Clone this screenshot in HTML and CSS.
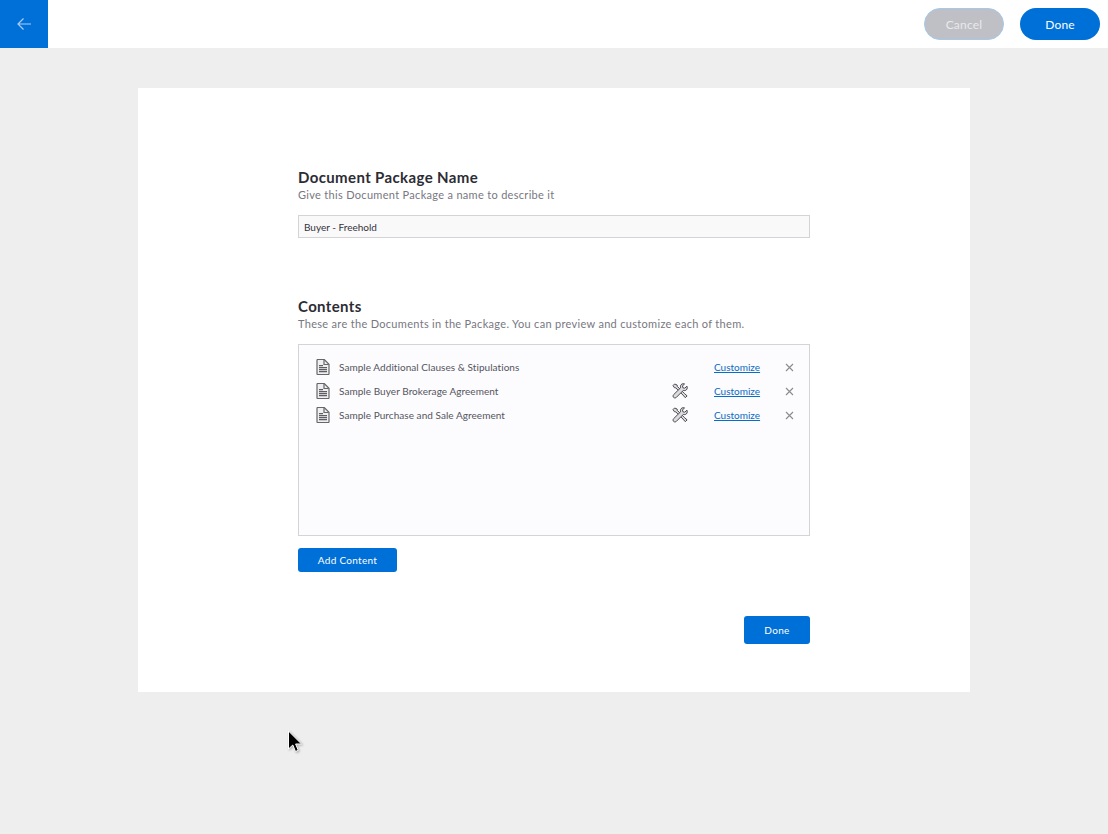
FILE: index.html
```html
<!DOCTYPE html>
<html lang="en">
<head>
<meta charset="utf-8">
<title>Document Package</title>
<link rel="stylesheet" href="styles.css">
</head>
<body>
<svg class="defs" width="0" height="0" aria-hidden="true">
  <symbol id="doc" viewBox="0 0 14 16">
    <path d="M1 1.200C1 .8 1.300.5 1.700.5h6.500l4.800 4.800v9.500c0 .4-.3.7-.7.7H1.700c-.4 0-.7-.3-.7-.7z" fill="#efeff0" stroke="#66666c" stroke-width="1.200"/>
    <path d="M8 .8v4.700h4.700" fill="none" stroke="#66666c" stroke-width="1.200"/>
    <path d="M3 6.600h4M3 8.600h8M3 10.600h8M3 12.600h8" stroke="#5c5c62" stroke-width="1.100"/>
  </symbol>
  <symbol id="tools" viewBox="0 0 16 16">
    <path d="M2.600 1 1 2.600l1.400 2.100 1.400.2 7.200 7.200 2.300 2.600 1.800-1.800-2.600-2.300-7.200-7.200-.2-1.400z" fill="#dcdcdf" stroke="#4a4a50" stroke-width="1"/>
    <path d="M15 3.200l-2.300 2-1.800-.4-.4-1.800 2-2.200c-1.800-.5-3.600.4-4 2-.2.700-.1 1.400.1 2l-7 6.900c-.7.700-.7 2 0 2.700s2 .7 2.700 0l7-7c.6.200 1.300.3 2 .1 1.500-.4 2.500-2.200 1.700-4.300z" fill="#dcdcdf" stroke="#4a4a50" stroke-width="1" stroke-linejoin="round"/>
  </symbol>
  <symbol id="close" viewBox="0 0 9 9">
    <path d="M1 1l7 7M8 1 1 8" fill="none" stroke="#8a8a90" stroke-width="1.100"/>
  </symbol>
</svg>

<header class="topbar">
  <a class="back" href="#" aria-label="Back">
    <svg width="16" height="14" viewBox="0 0 16 14"><path d="M15 7H2M7.500 1.500 2 7l5.500 5.500" fill="none" stroke="#a9cdf3" stroke-width="1.200"/></svg>
  </a>
  <div class="top-actions">
    <button class="pill pill-muted" type="button">Cancel</button>
    <button class="pill pill-primary" type="button">Done</button>
  </div>
</header>

<main class="stage">
  <section class="card">
    <div class="form">
      <h2 class="title">Document Package Name</h2>
      <p class="hint">Give this Document Package a name to describe it</p>
      <input class="name-input" type="text" value="Buyer - Freehold">

      <h2 class="title contents-title">Contents</h2>
      <p class="hint">These are the Documents in the Package. You can preview and customize each of them.</p>
      <ul class="doc-list">
        <li class="doc-row">
          <svg class="doc-icon"><use href="#doc"/></svg>
          <span class="doc-name">Sample Additional Clauses &amp; Stipulations</span>
          <a class="customize" href="#">Customize</a>
          <svg class="close-icon"><use href="#close"/></svg>
        </li>
        <li class="doc-row">
          <svg class="doc-icon"><use href="#doc"/></svg>
          <span class="doc-name">Sample Buyer Brokerage Agreement</span>
          <svg class="tools-icon"><use href="#tools"/></svg>
          <a class="customize" href="#">Customize</a>
          <svg class="close-icon"><use href="#close"/></svg>
        </li>
        <li class="doc-row">
          <svg class="doc-icon"><use href="#doc"/></svg>
          <span class="doc-name">Sample Purchase and Sale Agreement</span>
          <svg class="tools-icon"><use href="#tools"/></svg>
          <a class="customize" href="#">Customize</a>
          <svg class="close-icon"><use href="#close"/></svg>
        </li>
      </ul>
      <button class="btn btn-add" type="button">Add Content</button>
      <div class="form-footer">
        <button class="btn btn-done" type="button">Done</button>
      </div>
    </div>
  </section>
</main>

<svg class="cursor" width="16" height="24" viewBox="0 0 16 24" aria-hidden="true">
  <path d="M1.500 1v18l4.300-4 2.700 6.500 2.800-1.200-2.700-6.300h5.900z" fill="#000" stroke="#fff" stroke-width="1"/>
</svg>
</body>
</html>
```
FILE: styles.css
```css
* { box-sizing: border-box; }
html, body { height: 100%; }
body {
  margin: 0;
  background: #eeeeef;
  font-family: "Lato", "Noto Sans", sans-serif;
  color: #2c2c34;
  overflow: hidden;
  position: relative;
}
.defs { position: absolute; }

.topbar {
  height: 48px;
  background: #fff;
  display: flex;
  align-items: center;
  justify-content: space-between;
}
.back {
  width: 48px;
  height: 48px;
  background: #0070d9;
  display: flex;
  align-items: center;
  justify-content: center;
}
.top-actions {
  display: flex;
  gap: 16px;
  padding-right: 8px;
}
.pill {
  width: 80px;
  height: 32px;
  border-radius: 16px;
  border: 0;
  font: inherit;
  font-size: 12px;
  letter-spacing: .2px;
  color: #fff;
}
.pill-muted {
  background: #bfc0c5;
  border: 1px solid #a5c9e8;
  color: #e9e9ec;
}
.pill-primary { background: #0070d9; }

.stage { padding: 40px 138px 0; }
.card {
  height: 604px;
  background: #fff;
  padding: 80px 160px 0;
}
.form { width: 512px; }
.title {
  margin: 0 0 1px;
  font-size: 15px;
  line-height: 18px;
  font-weight: 700;
  letter-spacing: .37px;
  color: #2c2c34;
}
.hint {
  margin: 0;
  font-size: 11px;
  line-height: 16px;
  letter-spacing: .31px;
  color: #77777f;
}
.name-input {
  display: block;
  width: 100%;
  height: 23px;
  margin-top: 12px;
  padding: 0 5px;
  background: #f9f9fa;
  border: 1px solid #d4d4d8;
  font-family: inherit;
  font-size: 10px;
  letter-spacing: 0;
  color: #33333b;
  outline: 0;
}
.contents-title { margin-top: 59px; }
.doc-list {
  list-style: none;
  height: 192px;
  margin: 12px 0 0;
  padding: 10px 0 0;
  background: #fcfbfd;
  border: 1px solid #d4d4d8;
}
.doc-row {
  height: 24px;
  display: flex;
  align-items: center;
  padding-left: 17px;
}
.doc-icon { width: 14px; height: 16px; flex: none; margin-right: 9px; }
.doc-name {
  flex: 1;
  font-size: 10px;
  letter-spacing: .05px;
  color: #55555d;
}
.tools-icon { width: 16px; height: 16px; flex: none; margin-right: 25px; }
.customize {
  width: 46px;
  margin-left: 1px;
  flex: none;
  font-size: 10px;
  letter-spacing: 0;
  color: #0a6cc4;
}
.close-icon { width: 9px; height: 9px; flex: none; margin: 0 15px 0 25px; }
.btn {
  display: block;
  border: 0;
  border-radius: 3px;
  background: #0070d9;
  color: #fff;
  font: inherit;
  font-size: 10px;
  letter-spacing: .3px;
}
.btn-add { width: 99px; height: 24px; margin-top: 12px; }
.form-footer {
  display: flex;
  justify-content: flex-end;
  margin-top: 44px;
}
.btn-done { width: 66px; height: 28px; }

.cursor {
  position: absolute;
  left: 287px;
  top: 730px;
  filter: drop-shadow(1px 1px 1px rgba(0, 0, 0, .3));
}
```
